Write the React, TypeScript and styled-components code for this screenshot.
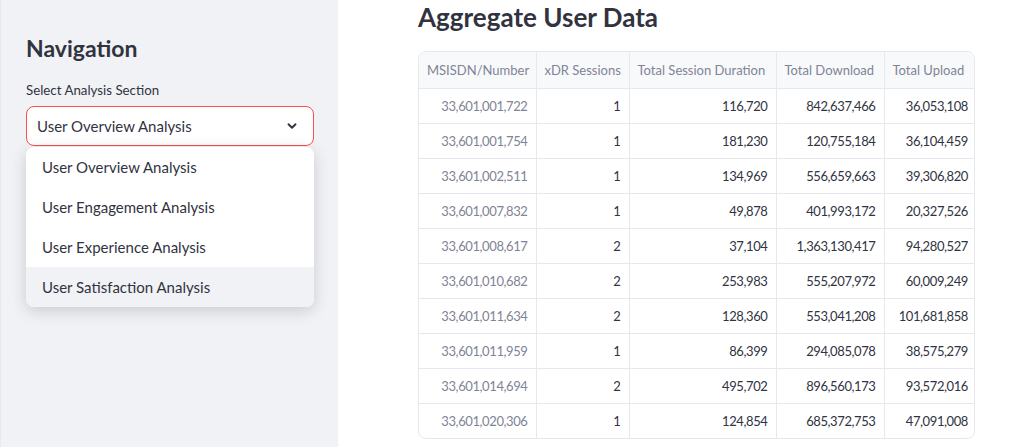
import React from "react";
import styled, { createGlobalStyle } from "styled-components";

const Global = createGlobalStyle`
  html, body { margin: 0; padding: 0; background: #ffffff; }
  body { font-family: Lato, "Noto Sans", sans-serif; color: rgb(49, 51, 63); }
  * { box-sizing: border-box; }
`;

const Page = styled.div`
  display: flex;
  width: 1017px;
  height: 447px;
  overflow: hidden;
`;

const Sidebar = styled.aside`
  width: 338px;
  flex-shrink: 0;
  background: #f0f2f6;
  border-left: 1px solid #e6e8ee;
  padding: 30px 24px 0 25px;
  display: flex;
  flex-direction: column;
`;

const SideTitle = styled.h2`
  margin: 0 0 14px;
  font-size: 23px;
  font-weight: 700;
  line-height: 36px;
  color: rgb(49, 51, 63);
`;

const Label = styled.label`
  font-size: 13.3px;
  line-height: 20px;
  margin-bottom: 6px;
  color: rgb(49, 51, 63);
`;

const SelectWrap = styled.div`
  position: relative;
  width: 288px;
`;

const SelectBox = styled.div`
  height: 40px;
  border: 1px solid rgb(255, 75, 75);
  border-radius: 8px;
  background: #ffffff;
  display: flex;
  align-items: center;
  justify-content: space-between;
  padding: 0 14px 0 10px;
  font-size: 15px;
`;

const Menu = styled.ul`
  position: absolute;
  top: 41px;
  left: 0;
  right: 0;
  margin: 0;
  padding: 0;
  list-style: none;
  background: #ffffff;
  border-radius: 8px;
  overflow: hidden;
  box-shadow: 0 4px 16px rgba(0, 0, 0, 0.16);
`;

const MenuItem = styled.li<{ $active?: boolean }>`
  height: 40px;
  display: flex;
  align-items: center;
  padding-left: 16px;
  font-size: 15px;
  color: rgb(49, 51, 63);
  background: ${(p) => (p.$active ? "#f0f2f6" : "transparent")};
`;

const Main = styled.main`
  flex: 1;
  padding: 0 0 0 80px;
  display: flex;
  flex-direction: column;
`;

const Title = styled.h1`
  margin: 0;
  padding-top: 1px;
  font-size: 26px;
  font-weight: 700;
  line-height: 32px;
  color: rgb(49, 51, 63);
  height: 51px;
`;

const Grid = styled.div`
  width: 557px;
  border: 1px solid #e6e8ee;
  border-radius: 8px;
  overflow: hidden;
`;

const Table = styled.table`
  border-collapse: collapse;
  width: 100%;
  font-size: 13px;
  table-layout: fixed;
`;

const Th = styled.th`
  height: 36px;
  background: #f8f9fb;
  color: rgb(128, 132, 149);
  font-weight: 400;
  text-align: left;
  padding: 0 8px;
  white-space: nowrap;
  border-right: 1px solid #e6e8ee;
  border-bottom: 1px solid #e6e8ee;
  &:last-child { border-right: none; }
`;

const Td = styled.td<{ $index?: boolean }>`
  height: 35px;
  text-align: right;
  padding: 0 8px;
  white-space: nowrap;
  letter-spacing: -0.4px;
  color: ${(p) => (p.$index ? "rgb(128, 132, 149)" : "rgb(49, 51, 63)")};
  border-right: 1px solid #e6e8ee;
  border-bottom: 1px solid #e6e8ee;
  &:last-child { border-right: none; }
  tr:last-child > & { border-bottom: none; }
`;

const Chevron = () => (
  <svg width="14" height="14" viewBox="0 0 24 24" fill="none" stroke="rgb(49,51,63)" strokeWidth="3.2" strokeLinecap="round" strokeLinejoin="round">
    <path d="M6 9l6 6 6-6" />
  </svg>
);

const rows: [string, string, string, string, string][] = [
  ["33,601,001,722", "1", "116,720", "842,637,466", "36,053,108"],
  ["33,601,001,754", "1", "181,230", "120,755,184", "36,104,459"],
  ["33,601,002,511", "1", "134,969", "556,659,663", "39,306,820"],
  ["33,601,007,832", "1", "49,878", "401,993,172", "20,327,526"],
  ["33,601,008,617", "2", "37,104", "1,363,130,417", "94,280,527"],
  ["33,601,010,682", "2", "253,983", "555,207,972", "60,009,249"],
  ["33,601,011,634", "2", "128,360", "553,041,208", "101,681,858"],
  ["33,601,011,959", "1", "86,399", "294,085,078", "38,575,279"],
  ["33,601,014,694", "2", "495,702", "896,560,173", "93,572,016"],
  ["33,601,020,306", "1", "124,854", "685,372,753", "47,091,008"],
];

const cols = [
  { name: "MSISDN/Number", w: 117 },
  { name: "xDR Sessions", w: 93 },
  { name: "Total Session Duration", w: 147 },
  { name: "Total Download", w: 108 },
  { name: "Total Upload", w: 92 },
];

const options = [
  "User Overview Analysis",
  "User Engagement Analysis",
  "User Experience Analysis",
  "User Satisfaction Analysis",
];

export default function App() {
  return (
    <>
      <Global />
      <Page>
        <Sidebar>
          <SideTitle>Navigation</SideTitle>
          <Label>Select Analysis Section</Label>
          <SelectWrap>
            <SelectBox>
              <span>User Overview Analysis</span>
              <Chevron />
            </SelectBox>
            <Menu>
              {options.map((o, i) => (
                <MenuItem key={o} $active={i === 3}>{o}</MenuItem>
              ))}
            </Menu>
          </SelectWrap>
        </Sidebar>
        <Main>
          <Title>Aggregate User Data</Title>
          <Grid>
            <Table>
              <colgroup>
                {cols.map((c) => (
                  <col key={c.name} style={{ width: c.w }} />
                ))}
              </colgroup>
              <thead>
                <tr>
                  {cols.map((c) => (
                    <Th key={c.name}>{c.name}</Th>
                  ))}
                </tr>
              </thead>
              <tbody>
                {rows.map((r) => (
                  <tr key={r[0]}>
                    {r.map((v, i) => (
                      <Td key={i} $index={i === 0}>{v}</Td>
                    ))}
                  </tr>
                ))}
              </tbody>
            </Table>
          </Grid>
        </Main>
      </Page>
    </>
  );
}
